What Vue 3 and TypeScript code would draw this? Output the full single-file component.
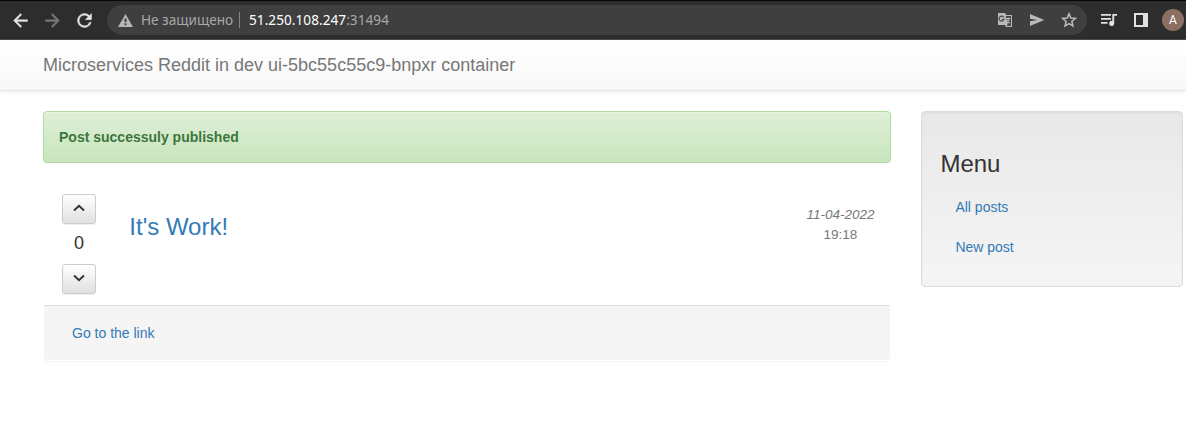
<script setup lang="ts">
import { ref } from 'vue'

interface MenuItem {
  label: string
  href: string
}

const votes = ref<number>(0)
const menu: MenuItem[] = [
  { label: 'All posts', href: '#' },
  { label: 'New post', href: '#' },
]
</script>

<template>
  <div class="window">
    <header class="toolbar">
      <nav class="nav-icons">
        <svg class="icon bright" viewBox="0 0 24 24"><path d="M20 11H7.8l5.6-5.6L12 4l-8 8 8 8 1.4-1.4L7.8 13H20z" stroke-width=".5" stroke="currentColor" /></svg>
        <svg class="icon dim" viewBox="0 0 24 24"><path d="M4 11h12.2l-5.6-5.6L12 4l8 8-8 8-1.4-1.4 5.6-5.6H4z" stroke-width=".5" stroke="currentColor" /></svg>
        <svg class="icon bright" viewBox="0 0 24 24"><path d="M17.65 6.35A8 8 0 1 0 19.73 14h-2.08A6 6 0 1 1 12 6c1.66 0 3.14.69 4.22 1.78L13 11h7V4z" stroke-width=".5" stroke="currentColor" /></svg>
      </nav>
      <div class="omnibox">
        <svg class="warning" viewBox="0 0 15 13"><path fill-rule="evenodd" d="M7.5 0 15 13H0zM6.5 4.6v3.5h2V4.6zm0 4.6v2h2v-2z" /></svg>
        <span class="security">Не защищено</span>
        <span class="separator"></span>
        <span class="host">51.250.108.247</span><span class="port">:31494</span>
        <div class="actions">
          <svg class="action" viewBox="0 0 16 16">
            <path d="M1 1h7l1 2h6v12H9l-1-2H1z" />
            <path class="cut" d="M8.7 4H14v10H9.5l1.3-2z" />
            <path class="mark" d="M6.8 5.4A2.5 2.5 0 1 0 7 7.3H4.8" />
            <path class="glyph" d="M9.2 6.5h4M11.2 5.5v1M12.4 6.5c-.4 2-1.3 3.2-2.4 4M9.8 7.5l3 3.8" />
          </svg>
          <svg class="action" viewBox="0 0 16 16"><path d="M1 2 15.2 8 1 14V9.3L8.5 8 1 6.7z" /></svg>
          <svg class="action" viewBox="0 0 16 16"><path class="star" d="m8 1.9 1.8 4.2 4.5.4-3.4 3 1 4.4L8 11.6l-3.9 2.3 1-4.4-3.4-3 4.5-.4z" /></svg>
        </div>
      </div>
      <div class="tools">
        <svg class="queue" viewBox="0 0 18 16"><path d="M1 2h10v1.7H1zm0 4h10v1.7H1zm0 4h6.5v1.7H1zM12.3 2H17v1.8h-2.8v7.6A2.5 2.5 0 1 1 12.3 9z" /></svg>
        <svg class="side" viewBox="0 0 14 14"><path fill-rule="evenodd" d="M0 0h14v14H0zM2 2v10h7V2z" /></svg>
        <span class="avatar">A</span>
      </div>
    </header>

    <div class="navbar">Microservices Reddit in dev ui-5bc55c55c9-bnpxr container</div>

    <div class="container">
      <main>
        <div class="alert">Post successuly published</div>
        <article class="panel">
          <div class="post">
            <div class="votes">
              <button type="button" aria-label="Vote up" @click="votes++">
                <svg viewBox="0 0 12 8"><path d="M1 6.5 6 1.7l5 4.8" /></svg>
              </button>
              <span>{{ votes }}</span>
              <button type="button" aria-label="Vote down" @click="votes--">
                <svg viewBox="0 0 12 8"><path d="m1 1.5 5 4.8 5-4.8" /></svg>
              </button>
            </div>
            <h3><a href="#">It's Work!</a></h3>
            <div class="date"><em>11-04-2022</em><span>19:18</span></div>
          </div>
          <footer><a href="#">Go to the link</a></footer>
        </article>
      </main>
      <aside>
        <h3>Menu</h3>
        <a v-for="item in menu" :key="item.label" :href="item.href">{{ item.label }}</a>
      </aside>
    </div>
  </div>
</template>

<style>
body {
  background: #fff;
}
</style>

<style scoped>
* {
  box-sizing: border-box;
}
.window {
  height: 432px;
  overflow: hidden;
  font: 14px/20px "Liberation Sans", Arial, sans-serif;
  color: #333;
}
a {
  color: #337ab7;
  text-decoration: none;
}
h3 {
  margin: 0;
  font-size: 24px;
  font-weight: 400;
  line-height: 26px;
}
.toolbar {
  display: flex;
  align-items: center;
  height: 40px;
  border-top: 1px solid #050505;
  border-bottom: 1px solid #4b4b4b;
  background: #2d2d2d;
}
.nav-icons {
  display: flex;
  gap: 11px;
  width: 107px;
  padding-left: 10px;
}
.icon {
  width: 21px;
  height: 21px;
  fill: currentColor;
}
.bright {
  color: #e2e3e3;
}
.dim {
  color: #777;
}
.omnibox {
  display: flex;
  align-items: center;
  width: 980px;
  height: 30px;
  padding-left: 10.5px;
  border-radius: 15px;
  background: #3f3f3f;
  color: #a6a8ab;
  font: 13.6px/30px "Noto Sans", "Open Sans", sans-serif;
}
.warning {
  width: 15px;
  height: 13px;
  fill: #b3b6ba;
}
.security {
  width: 91px;
  margin-left: 8.5px;
  white-space: nowrap;
}
.separator {
  width: 1px;
  height: 16px;
  margin: 0 9px 0 7px;
  background: #85878a;
}
.host {
  color: #fff;
}
.host,
.port {
  letter-spacing: .05px;
}
.actions {
  display: flex;
  gap: 16px;
  margin: 0 10px 0 auto;
}
.action {
  width: 16px;
  height: 16px;
  fill: #b8babd;
}
.action .cut {
  fill: #454545;
}
.action .mark,
.action .glyph,
.action .star {
  fill: none;
  stroke: #444;
  stroke-width: 1.1;
}
.action .glyph {
  stroke: #b8babd;
}
.action .star {
  stroke: #b8babd;
  stroke-width: 1.6;
}
.tools {
  display: flex;
  align-items: center;
  margin-left: 13px;
}
.queue {
  width: 18px;
  height: 16px;
  fill: #dfe1e2;
}
.side {
  width: 14px;
  height: 14px;
  margin: 0 14px 0 16px;
  fill: #dfe1e2;
}
.avatar {
  width: 22px;
  height: 22px;
  border-radius: 50%;
  background: #8d6e63;
  color: #fff;
  font: 400 12px/22px Roboto, sans-serif;
  text-align: center;
}
.navbar {
  height: 51px;
  padding: 15px 43px;
  border-bottom: 1px solid #e7e7e7;
  background: linear-gradient(#fff, #f8f8f8);
  box-shadow: 0 1px 5px rgba(0, 0, 0, .075);
  color: #777;
  font-size: 18px;
}
.container {
  display: flex;
  align-items: flex-start;
  gap: 30px;
  padding: 20px 3px 0 43px;
}
main {
  width: 848px;
}
.alert {
  height: 52px;
  margin-bottom: 20px;
  padding: 15px;
  border: 1px solid #b2dba1;
  border-radius: 4px;
  background: linear-gradient(#dff0d8, #c8e5bc);
  box-shadow: inset 0 1px 0 rgba(255, 255, 255, .25), 0 1px 2px rgba(0, 0, 0, .05);
  color: #3c763d;
  font-weight: 700;
}
.panel {
  height: 178px;
  border: 1px solid transparent;
  border-radius: 4px;
  box-shadow: 0 1px 1px rgba(0, 0, 0, .05);
}
.post {
  display: flex;
  height: 121px;
  padding-top: 10px;
}
.votes {
  display: flex;
  flex-direction: column;
  align-items: center;
  width: 34px;
  margin-left: 18px;
  font-size: 18px;
}
.votes span {
  height: 40px;
  line-height: 38px;
}
.votes button {
  display: flex;
  align-items: center;
  justify-content: center;
  width: 34px;
  height: 30px;
  padding: 0 0 3px;
  border: 1px solid #ccc;
  border-radius: 3px;
  background: linear-gradient(#fff, #e0e0e0);
  box-shadow: inset 0 1px 0 rgba(255, 255, 255, .15), 0 1px 1px rgba(0, 0, 0, .075);
}
.votes svg {
  width: 12px;
  height: 8px;
  fill: none;
  stroke: #333;
  stroke-width: 1.9;
}
.post h3 {
  margin: 20px 0 0 33.3px;
}
.date {
  display: flex;
  flex-direction: column;
  align-items: center;
  margin: 11px 15.5px 0 auto;
  color: #777;
  font-size: 13.5px;
}
footer {
  height: 55px;
  padding: 17px 28px;
  border-top: 1px solid #ddd;
  border-radius: 0 0 3px 3px;
  background: #f5f5f5;
}
aside {
  display: flex;
  flex-direction: column;
  width: 262px;
  height: 176px;
  padding: 39px 18.4px 0;
  border: 1px solid #dcdcdc;
  border-radius: 4px;
  background: linear-gradient(#e8e8e8, #f5f5f5);
  box-shadow: inset 0 1px 3px rgba(0, 0, 0, .05), 0 1px 0 rgba(255, 255, 255, .1);
}
aside h3 {
  margin-bottom: 10px;
}
aside a {
  padding: 10px 15px;
}
</style>
